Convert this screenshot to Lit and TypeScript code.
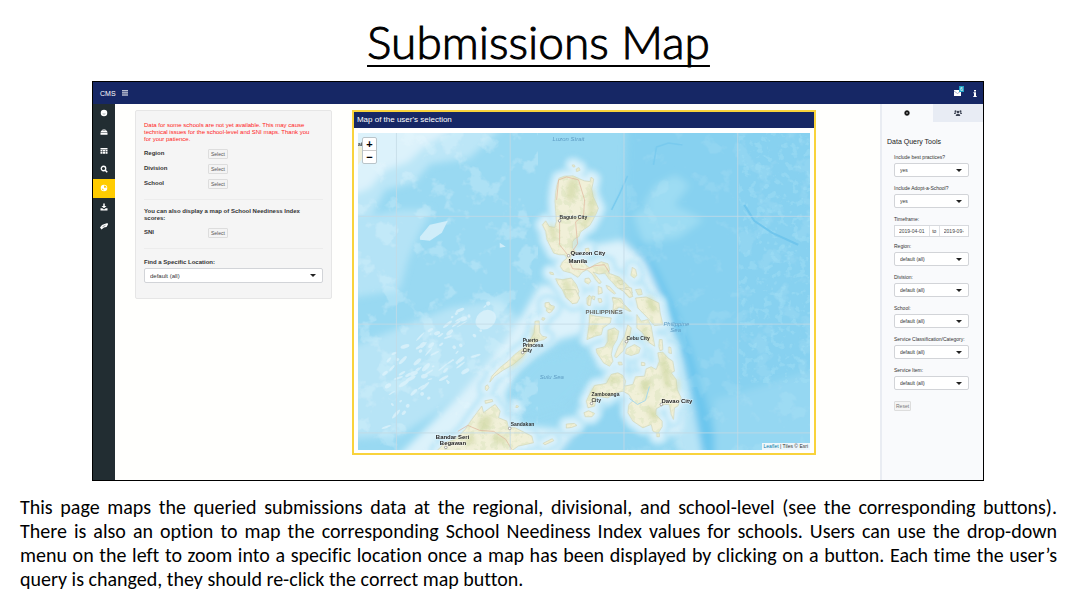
import { LitElement, html, css, svg } from "lit";
import { customElement } from "lit/decorators.js";

const NAV_ICONS = [
  { name: "Home", active: false, art: svg`<circle cx="8" cy="8" r="6.5"/><path d="M4.5 9c1 3 6 3 7 0z" fill="#aab3b7"/>` },
  { name: "Toolbox", active: false, art: svg`<path d="M5 5V3h6v2h2l2 3H1l2-3zM6.4 5h3.2v-.8H6.4zM1 9h14v4.500H1z" fill-rule="evenodd"/>` },
  { name: "Table", active: false, art: svg`<path d="M1 2h14v3H1zM1 6h4v3.200H1zM6 6h4v3.200H6zM11 6h4v3.200h-4zM1 10.200h4v3.500H1zM6 10.200h4v3.500H6zM11 10.200h4v3.500h-4z"/>` },
  { name: "Search", active: false, art: svg`<circle cx="7" cy="7" r="4.500" fill="none" stroke="#fff" stroke-width="2.600"/><path d="M10 10l4.500 4.500" stroke="#fff" stroke-width="3"/>` },
  { name: "Map", active: true, art: svg`<circle cx="8" cy="8" r="6.500"/><path d="M8 3l4 1 1 4-3-1-2 1zM3.500 9l3 1 1 3-2.500-1z" fill="#ffcc00"/>` },
  { name: "Download", active: false, art: svg`<path d="M6.500 1h3v5H13L8 10.500 3 6h3.500zM1 10.500h3.500L8 13l3.500-2.500H15V15H1z"/>` },
  { name: "Resources", active: false, art: svg`<path d="M0 11L4 6l5-2 6-2 1 3-3 5-5 1-5 4z"/><path d="M5 9.500l6-3" stroke="#222d32"/>` },
];

const LUZON = svg`
  <path d="M78 82L82 60 88 40 105 34 130 33 150 42 165 48 182 50 184 37 192 42 190 55 186 72 190 95 198 112 206 130 200 145 190 165 180 182 165 192 152 202 148 215 135 222 128 232 128 250 140 262 125 270 122 285 135 290 158 288 168 300 180 310 195 300 215 291 235 297 240 315 235 325 250 330 270 338 282 350 302 370 308 385 295 395 280 378 262 368 248 352 238 342 226 325 208 328 190 322 205 340 215 352 210 358 198 345 188 328 172 315 158 322 145 338 125 325 100 318 92 305 98 292 112 280 105 270 90 270 72 265 62 245 52 225 48 200 38 180 48 168 58 185 75 188 80 170 78 140 76 110z"/>
  <path d="M78 342L100 345 125 340 140 360 148 380 140 405 128 415 110 400 98 375 85 358z"/>
  <path d="M308 308l10 6 4 18-8 8-10-8 2-10zM166 342l12-2 6 10-8 8-10-6zM167 252l10-2 2 10-10 4zM230 362l10 4 18 20-4 2-20-16zM262 350l14-4 6 12-10 2zM288 368l18 2 2 22-10 6-8-12zM60 322l10 2 2 6-10-2z"/>
  <path d="M250 398L275 402 285 420 305 440 290 432 270 425 250 448 255 420zM172 400l8-8 4 8-6 22-6-4zM188 394l8 2-2 10-6-4zM205 402l10 0 2 10-8 2zM48 415l12 2 6 8 8 4-8 12-8 4-8-6 2-12z"/>
  <path d="M140 12l8-4 3 8-10 4zM128 0l6 0 2 6-6 0z"/>
`;

const VISAYAS = svg`
  <path d="M408 25L440 22 478 40 482 70 490 105 465 108 440 80 415 55z"/>
  <path d="M270 75L290 80 335 85 332 100 310 115 305 135 285 140 262 150 268 110z"/>
  <path d="M325 122L345 115 358 125 352 150 340 170 335 195 340 215 330 230 312 220 292 190 290 178 315 172 325 155z"/>
  <path d="M385 105L395 115 388 150 370 185 350 205 345 200 355 175 375 140z"/>
  <path d="M380 178L405 165 422 175 418 190 395 198 378 192z"/>
  <path d="M412 75L425 95 445 90 455 110 460 140 466 170 450 160 430 130 412 115z"/>
  <path d="M-30 278L-24 260 0 235 25 215 45 195 65 180 80 170 95 145 103 130 106 95 118 94 120 130 128 140 142 143 132 150 110 155 90 175 70 200 40 225 10 242-16 260z"/>
  <path d="M370 258L378 275 375 290 400 285 408 262 435 260 440 238 455 232 470 240 480 215 475 190 490 188 505 205 520 215 525 245 515 250 530 270 533 300 545 325 535 350 525 355 522 390 515 375 510 345 495 345 485 350 470 358 468 375 488 395 488 412 475 432 460 425 455 405 430 415 400 395 385 370 388 345 400 335 388 315 370 305 350 310 325 325 290 320 285 350 265 355 260 335 272 310 285 288 320 282 335 255 355 250z"/>
  <path d="M253 370l14-6 18 8-8 10-20 0zM200 404l24-2 8 6-16 6-16 2zM130 462l28-14 4 6-26 12zM480 150l8 0 2 30-8 4-4-14zM508 172l6 2 2 18-8-2zM426 218l10 2 0 8-10 0zM356 218l10 0 2 8-10 0z"/>
  <path d="M192 0L228 0 240 25 232 40 218 42 200 22zM136 40l12-2 2 8 14 4-8 12-12-6-8-4zM128 84l8 2-4 6-6-2zM268 18l8 4-4 26-8-2zM296 -10l10 4 2 16-12 4zM338 24L358 30 375 48 392 66 376 58 358 52 340 62 342 42zM360-4l28 4 12 20-10 4-12-14zM408 0l16-2 4 16-12 2zM472 430l8 2 0 10-8 0z"/>
  <path d="M-189 484L-164 460-134 450-104 420-84 390-69 370-54 350-49 370-29 355-14 345 1 365-4 385 21 395 26 415 46 415 96 440 101 460 56 470 36 484z"/>
  <path d="M-43 290l6-4 4 8-6 10-4-4zM-45 334l22-4 2 6-22 6zM50 348l6 2-2 4-6 0z"/>
`;

const HILLS: [number, number, number, number, number][] = [
  [572, 190, 5, 12, 8], [592, 203, 3, 15, 0], [587, 220, 3, 10, 35], [553, 232, 3, 9, -15], [575, 243, 2, 8, 10],
  [568, 287, 3, 8, -20], [603, 270, 5, 2, 20], [620, 282, 6, 2, 40], [652, 305, 4, 9, -20], [593, 329, 3, 6, 15],
  [611, 338, 3, 8, 5], [628, 338, 1, 10, 25], [646, 334, 2, 9, -20], [518, 361, 2, 12, 45],
  [534, 334, 2, 7, 0], [666, 372, 4, 18, -10], [646, 386, 5, 7, 20], [614, 380, 8, 3, -15], [653, 414, 4, 8, -30],
  [594, 392, 2, 6, 20], [485, 424, 6, 9, 35], [500, 440, 8, 4, 15], [470, 440, 5, 5, -30], [678, 386, 2, 7, 0],
];

const noise = (i: number) => {
  const v = Math.sin(i * 127.1 + 31.7) * 43758.5453;
  return v - Math.floor(v);
};

const REEFS = Array.from({ length: 80 }, (_, i) => {
  const t = noise(i);
  return {
    x: 385 + t * 105,
    y: 395 - t * 75 + (noise(i + 200) - 0.5) * 70,
    rx: 1 + noise(i + 400) * 5,
    ry: 0.6 + noise(i + 600) * 1.6,
    a: -15 - noise(i + 800) * 35,
  };
});

const CITIES: [number, number][] = [
  [560, 221], [569, 256], [627, 342], [523, 353], [592, 404], [662, 405], [510, 429], [446, 448],
];

@customElement("app-root")
export class AppRoot extends LitElement {
  static styles = css`
    :host {
      display: block;
      min-height: 100vh;
      background: #fff;
      color: #000;
      font-family: "Liberation Sans", Arial, sans-serif;
    }
    * { box-sizing: border-box; }
    h1, h2, h3, p { margin: 0; }
    .slide { padding: 13px 20px 0; }
    .title {
      text-align: center;
      font-family: "Lato Light", Lato, sans-serif;
      font-weight: 300;
      font-size: 46px;
      line-height: 58px;
      -webkit-text-stroke: 1px #000;
      text-decoration: underline;
      text-decoration-thickness: 2px;
      text-underline-offset: 6px;
      text-decoration-skip-ink: none;
    }
    .caption {
      font-family: Carlito, Lato, sans-serif;
      font-size: 20px;
      line-height: 24px;
      font-variant-ligatures: none;
      text-align: justify;
      margin-top: 14px;
    }
    .app { margin: 10px 73px 0 72px; border: 1px solid #000; background: #fffffd; }
    .topbar {
      display: flex; align-items: center; height: 22px; padding: 0 6px 0 7px;
      background: #162765; color: #fff; font-size: 7px;
    }
    .brand { margin-right: 6px; }
    .plain { border: 0; padding: 0; background: none; color: inherit; display: flex; font: inherit; }
    .spacer { flex: 1; }
    .mail { position: relative; margin-right: 12px; }
    .badge {
      position: absolute; right: -3px; top: -4px; width: 5px; height: 6px;
      background: #1f9fc4; color: #fff; font-size: 5px; line-height: 6px; text-align: center;
    }
    .body { display: grid; grid-template-columns: 22px minmax(0, 1fr) 103px; min-height: 376px; }
    .nav { background: #222d32; }
    .nav-list { display: grid; grid-auto-rows: 1fr; height: 131px; }
    .nav-item { display: flex; align-items: center; justify-content: center; }
    .nav-item.active { background: #ffcc00; }
    .nav-item svg { fill: #fff; }
    .main {
      display: grid; grid-template-columns: 14fr 33fr; gap: 20px; align-items: start;
      padding: 6px 64px 0 20px;
    }
    .query {
      background: #f5f5f5; border: 1px solid #e6e6e6; border-radius: 2px;
      padding: 11px 8px 15px; font-size: 6px; line-height: 7px; color: #333;
    }
    .warning { color: #f22; margin-bottom: 3px; padding-right: 5px; }
    .row { display: grid; grid-template-columns: 64px auto; align-items: center; justify-content: start; height: 15px; font-weight: 700; }
    .note { font-weight: 700; margin-bottom: 3px; padding-right: 14px; }
    .rule { border: 0; border-top: 1px solid #ececec; margin: 8px 0; }
    .btn {
      height: 10px; padding: 0 2px; border: 1px solid #ddd; border-radius: 1px;
      background: #f4f4f4; color: #555; font: 5px/8px "Liberation Sans", Arial, sans-serif;
    }
    .field { display: grid; gap: 2px; margin-bottom: 7px; font-size: 5px; line-height: 8px; color: #333; white-space: nowrap; }
    .field.dates { margin-bottom: 5px; }
    .field.wide { font-size: 6px; font-weight: 700; margin: 9px 0 0; }
    .select { position: relative; display: grid; }
    .select::after {
      content: ""; position: absolute; right: 7px; top: 6px; pointer-events: none;
      border: 3px solid transparent; border-top-color: #222; border-bottom: 0;
    }
    select {
      appearance: none; width: 100%; height: 14px; padding: 0 5px; margin: 0;
      border: 1px solid #d2d4d8; border-radius: 2px; background: #fff; color: #333;
      font: 5px "Liberation Sans", Arial, sans-serif;
    }
    .wide select { height: 15px; font-size: 6px; }
    .map-card { border: 2px solid #f9d33c; background: #fff; }
    .map-title { background: #162765; color: #fff; font-size: 8px; line-height: 16px; padding: 0 3px; font-weight: 400; }
    .map-wrap { position: relative; padding: 5px 4px 3px; }
    .map { display: block; width: 100%; height: auto; }
    .zoom {
      position: absolute; left: 8px; top: 9px; display: grid; width: 15px;
      border: 1px solid #b9c4c9; border-radius: 2px; background: #fff;
    }
    .zoom button {
      height: 12px; border: 0; padding: 0; background: none; color: #000;
      font: 700 11px/11px "Liberation Sans", Arial, sans-serif;
    }
    .zoom button + button { height: 13px; border-top: 1px solid #ccc; }
    .credit {
      position: absolute; right: 4px; bottom: 3px; padding: 0 2px; background: #eef7fb;
      font-size: 5px; line-height: 7px; color: #333;
    }
    .credit a { color: #0078a8; text-decoration: none; }
    .tools { background: #f9fafc; border-left: 2px solid #e9ecf2; }
    .tabs { display: grid; grid-template-columns: 1fr 1fr; height: 18px; }
    .tab { display: flex; align-items: center; justify-content: center; border: 0; padding: 0; background: #f9fafc; }
    .tab + .tab { background: #e8ecf4; }
    .tools-title { font-size: 7px; line-height: 10px; font-weight: 400; color: #222; padding: 15px 5px 6px; }
    .form { display: flow-root; padding: 0 14px 0 12px; }
    .range { display: grid; grid-template-columns: 6fr 11px 5fr; height: 12px; border: 1px solid #d8dade; background: #fff; text-align: center; line-height: 10px; }
    .range input {
      min-width: 0; width: 100%; height: 10px; padding: 0; background: #fff; color: #444;
      border: 0 solid #fff; border-width: 0 4px;
      font: 5px "Liberation Sans", Arial, sans-serif;
    }
    .range span { border: 1px solid #e0e2e6; border-width: 0 1px; }
    .form .btn { display: block; margin-top: 11px; padding: 0 1px; color: #777; }
    .sea { font: italic 6px "Liberation Sans", Arial, sans-serif; fill: #5f9dc4; }
    .city { font: 700 6px "Liberation Sans", Arial, sans-serif; fill: #222; stroke: #fff; stroke-width: 1; stroke-opacity: 0.5; paint-order: stroke; }
    .town { font: 700 5px "Liberation Sans", Arial, sans-serif; fill: #333; }
    .country { font: 700 6px "Liberation Sans", Arial, sans-serif; fill: #6b6b66; }
    .land path { fill: #f1f0d8; stroke: #cdd2b4; stroke-width: 2; }
    .shelf-outer { fill: #bce6f7; stroke: #bce6f7; stroke-width: 50; stroke-linejoin: round; }
    .shelf-inner { fill: #dcf2fb; stroke: #dcf2fb; stroke-width: 24; stroke-linejoin: round; }
  `;

  private islands() {
    return svg`
      <g transform="translate(530 165) scale(.33333)">${LUZON}</g>
      <g transform="translate(500 290) scale(.33333)">${VISAYAS}</g>`;
  }

  private map() {
    return html`
      <svg class="map" viewBox="358 133 453 318" role="img" aria-label="Map of the Philippines">
        <defs>
          <filter id="deep" x="-10%" y="-10%" width="120%" height="120%"><feGaussianBlur stdDeviation="3.500"/></filter>
          <filter id="soft" x="-10%" y="-10%" width="120%" height="120%"><feGaussianBlur stdDeviation="2.200"/></filter>
          <filter id="haze" x="-10%" y="-10%" width="120%" height="120%"><feGaussianBlur stdDeviation=".6"/></filter>
          <filter id="patches" x="0" y="0" width="100%" height="100%">
            <feTurbulence type="fractalNoise" baseFrequency=".045" numOctaves="4" seed="7"/>
            <feColorMatrix values="0 0 0 0 .84  0 0 0 0 .95  0 0 0 0 1  9 0 0 0 -5"/>
          </filter>
          <filter id="ridges" x="0" y="0" width="100%" height="100%">
            <feTurbulence type="fractalNoise" baseFrequency=".14" numOctaves="3" seed="3"/>
            <feColorMatrix values="0 0 0 0 .38  0 0 0 0 .75  0 0 0 0 .92  9 0 0 0 -5"/>
          </filter>
          <filter id="terrain" x="0" y="0" width="100%" height="100%">
            <feTurbulence type="fractalNoise" baseFrequency=".16" numOctaves="3" seed="5"/>
            <feColorMatrix values="0 0 0 0 .74  0 0 0 0 .79  0 0 0 0 .55  8 0 0 0 -4"/>
            <feComposite in2="SourceAlpha" operator="in"/>
          </filter>
        </defs>
        <rect x="358" y="133" width="453" height="318" fill="#99d9f2"/>
        <g filter="url(#deep)">
          <path d="M628 120H830V470H700L668 400 650 330 622 250z" fill="#87d1f0"/>
          <path d="M340 120H510L470 158 430 164 415 182 385 190 372 215 340 222z" fill="#bce6f7"/>
          <path d="M340 120H470L425 146 408 162 385 170 370 188 340 200z" fill="#dcf2fb"/>
          <path d="M340 222L400 210 432 210 420 232 408 260 400 290 340 300z" fill="#b4e3f6"/>
          <path d="M340 352L400 328 450 308 500 300 520 320 500 360 440 410 400 436 340 440z" fill="#b7e4f6"/>
          <path d="M385 470L430 425 470 385 500 350 520 320 540 285 575 285 610 260 628 300 600 330 560 340 520 370 505 395 515 425 560 430 600 405 625 400 625 430 560 470z" fill="#dcf2fb"/>
          <path d="M545 470L590 415 618 400 632 415 650 440 655 470z" fill="#91d5f1"/>
          <path d="M600 245L632 250 655 275 672 310 688 350 705 400 720 470H690L670 430 600 300z" fill="#b7e4f6"/>
          <path d="M636 235L658 270 677 310 692 350 706 400 724 470H706L694 405 684 360 667 310 647 265z" fill="#6cc6ee"/>
          <path d="M588 246L622 240 645 262 660 295 672 340 682 380 684 430 660 440 600 300z" fill="#dcf2fb"/>
          <path d="M634 215l30-15 40 20-25 18-35 5zM644 205l12-20 20-10 14 10-18 24z" fill="#9ddcf3"/>
          <path d="M715 470V400L760 388 830 365V470z" fill="#95d7f2"/>
        </g>
        <g filter="url(#soft)">
          <g class="shelf-outer">${this.islands()}</g>
          <g class="shelf-inner">${this.islands()}</g>
        </g>
        <path d="M514 384L540 358 575 352 588 352 594 362 580 388 560 408 530 418 520 405z" fill="#99d9f2" filter="url(#deep)"/>
        <rect x="358" y="133" width="180" height="318" filter="url(#patches)" opacity=".25"/>
        <rect x="628" y="133" width="183" height="318" filter="url(#patches)" opacity=".1"/>
        <rect x="740" y="133" width="71" height="250" filter="url(#ridges)" opacity=".4"/>
        <g fill="#dcf2fb" filter="url(#haze)" opacity=".8">
          ${REEFS.map((r) => svg`<ellipse cx=${r.x} cy=${r.y} rx=${r.rx} ry=${r.ry} transform="rotate(${r.a} ${r.x} ${r.y})"/>`)}
          <path d="M420 237l10-12 18-4-6 12-12 8-10-1zM500 243l6 4-6 1z"/>
          <ellipse cx="486" cy="320" rx="11" ry="9" transform="rotate(-40 486 320)"/>
        </g>
        <g filter="url(#haze)" fill="none">
          <path d="M745 205l10 16 18 12 26 12" stroke="#6fc5ec" stroke-width="2"/>
          <path d="M654 165l3-18 12-4 14 2M612 210l8-16 8-18" stroke="#79caee" stroke-width="1.500"/>
        </g>
        <path d="M358 145l4 3 1 9-5 8z" fill="#f0efd6"/>
        <g class="land">${this.islands()}</g>
        <g filter="url(#terrain)" opacity=".6">${this.islands()}</g>
        <g filter="url(#soft)" fill="#ccd59f" opacity=".6">
          ${HILLS.map(([x, y, rx, ry, a]) => svg`<ellipse cx=${x} cy=${y} rx=${rx} ry=${ry} transform="rotate(${a} ${x} ${y})"/>`)}
        </g>
        <g stroke="#e0b49c" stroke-width=".7" fill="none">
          <path d="M557 200l2-20 8-3 12 3 6 20-1 16-8 6 2 22-7 10M560 221l0 24 8 10M570 262l3 7 12 1 10-4 10-1 5 8M458 432l10-6 12 5 14 1 12 8 6 10"/>
        </g>
        <path d="M630 399l8 6 8-4 4-14" stroke="#a9d8ea" fill="none"/>
        <path d="M396.500 133V451M510.500 133V451M624.500 133V451M738.500 133V451M358 216.500H811M358 324.500H811M358 433.500H811" stroke="#c3d9e4" stroke-opacity=".8"/>
        <g fill="#fff" stroke="#888" stroke-width=".7">
          ${CITIES.map(([x, y]) => svg`<circle cx=${x} cy=${y} r="1.300"/>`)}
        </g>
        <text class="sea" x="553" y="141">Luzon Strait</text>
        <text class="sea" x="540" y="379">Sulu Sea</text>
        <text class="sea" x="664" y="326">Philippine</text>
        <text class="sea" x="671" y="332">Sea</text>
        <text class="town" x="358" y="146">ai</text>
        <text class="town" x="560" y="219">Baguio City</text>
        <text class="city" x="571" y="255">Quezon City</text>
        <text class="city" x="569" y="263">Manila</text>
        <text class="country" x="586" y="314">PHILIPPINES</text>
        <text class="town" x="627" y="340">Cebu City</text>
        <text class="town" x="523" y="342">Puerto</text>
        <text class="town" x="523" y="347">Princesa</text>
        <text class="town" x="523" y="352">City</text>
        <text class="town" x="592" y="397">Zamboanga</text>
        <text class="town" x="592" y="403">City</text>
        <text class="city" x="662" y="404">Davao City</text>
        <text class="town" x="511" y="427">Sandakan</text>
        <text class="city" x="436" y="440">Bandar Seri</text>
        <text class="city" x="440" y="446">Begawan</text>
      </svg>`;
  }

  private choice(id: string, label: string, value: string, cls = "") {
    return html`<div class="field ${cls}">
      <label for=${id}>${label}</label>
      <div class="select"><select id=${id}><option>${value}</option></select></div>
    </div>`;
  }

  private row(label: string) {
    return html`<div class="row"><span>${label}</span><button class="btn" aria-label="Select ${label}">Select</button></div>`;
  }

  render() {
    return html`
      <main class="slide">
        <h1 class="title">Submissions Map</h1>
        <section class="app">
          <header class="topbar">
            <span class="brand">CMS</span>
            <button class="plain" aria-label="Toggle menu">
              <svg width="6" height="6" viewBox="0 0 6 6"><path d="M0 .8h6M0 2.900h6M0 5h6" stroke="#fff"/></svg>
            </button>
            <span class="spacer"></span>
            <button class="plain mail" aria-label="Messages">
              <svg width="7" height="6" viewBox="0 0 7 6"><path d="M0 0h7v6H0z" fill="#fff"/><path d="M0 1l3.500 2.500L7 1" stroke="#8290b8" stroke-width=".7" fill="none"/></svg>
              <span class="badge">6</span>
            </button>
            <button class="plain" aria-label="Information">
              <svg width="4" height="7" viewBox="0 0 4 7"><path d="M1 0h2v1.500H1zM.4 2.300H3V6h.7v1H.3V6H1V3.200H.4z" fill="#fff"/></svg>
            </button>
          </header>
          <div class="body">
            <nav class="nav">
              <div class="nav-list">
                ${NAV_ICONS.map((n) => html`<a class="nav-item ${n.active ? "active" : ""}" href="#" aria-label=${n.name}>
                  <svg width="8" height="8" viewBox="0 0 16 16">${n.art}</svg></a>`)}
              </div>
            </nav>
            <div class="main">
              <section class="query">
                <p class="warning">Data for some schools are not yet available. This may cause technical issues for the school-level and SNI maps. Thank you for&nbsp;your patience.</p>
                ${this.row("Region")}${this.row("Division")}${this.row("School")}
                <hr class="rule" />
                <p class="note">You can also display a map of School Neediness Index scores:</p>
                ${this.row("SNI")}
                <hr class="rule" />
                ${this.choice("location", "Find a Specific Location:", "default (all)", "wide")}
              </section>
              <section class="map-card">
                <h2 class="map-title">Map of the user's selection</h2>
                <div class="map-wrap">
                  ${this.map()}
                  <div class="zoom">
                    <button aria-label="Zoom in">+</button>
                    <button aria-label="Zoom out">−</button>
                  </div>
                  <div class="credit"><a href="#">Leaflet</a> | Tiles © Esri</div>
                </div>
              </section>
            </div>
            <aside class="tools">
              <div class="tabs">
                <button class="tab" aria-label="Settings">
                  <svg width="6" height="6" viewBox="0 0 12 12"><circle cx="6" cy="6" r="3" fill="none" stroke="#111" stroke-width="3"/><path d="M6 0v2M6 10v2M0 6h2M10 6h2M1.800 1.800l1.400 1.400M8.800 8.800l1.400 1.400M1.800 10.200l1.400-1.400M8.800 3.200l1.400-1.400" stroke="#111" stroke-width="2.200"/></svg>
                </button>
                <button class="tab" aria-label="Users">
                  <svg width="8" height="6" viewBox="0 0 16 12" fill="#3b4252"><circle cx="8" cy="4" r="2.600"/><circle cx="3" cy="2.500" r="2"/><circle cx="13" cy="2.500" r="2"/><path d="M3.500 12c0-6 9-6 9 0zM0 8c0-4 4-4 4.500-2.500L3 8zM16 8c0-4-4-4-4.500-2.500L13 8z"/></svg>
                </button>
              </div>
              <h3 class="tools-title">Data Query Tools</h3>
              <div class="form">
                ${this.choice("practices", "Include best practices?", "yes")}
                ${this.choice("adopt", "Include Adopt-a-School?", "yes")}
                <div class="field dates">
                  <label for="from">Timeframe:</label>
                  <div class="range">
                    <input id="from" type="text" value="2019-04-01" />
                    <span>to</span>
                    <input type="text" aria-label="Timeframe end" value="2019-09-30" />
                  </div>
                </div>
                ${this.choice("region", "Region:", "default (all)")}
                ${this.choice("division", "Division:", "default (all)")}
                ${this.choice("school", "School:", "default (all)")}
                ${this.choice("category", "Service Classification/Category:", "default (all)")}
                ${this.choice("item", "Service Item:", "default (all)")}
                <button class="btn">Reset</button>
              </div>
            </aside>
          </div>
        </section>
        <p class="caption">This page maps the queried submissions data at the regional, divisional, and school-level (see the corresponding buttons). There is also an option to map the corresponding School Neediness Index values for schools. Users can use the drop-down menu on the left to zoom into a specific location once a map has been displayed by clicking on a button. Each time the user’s query is changed, they should re-click the correct map button.</p>
      </main>`;
  }
}
